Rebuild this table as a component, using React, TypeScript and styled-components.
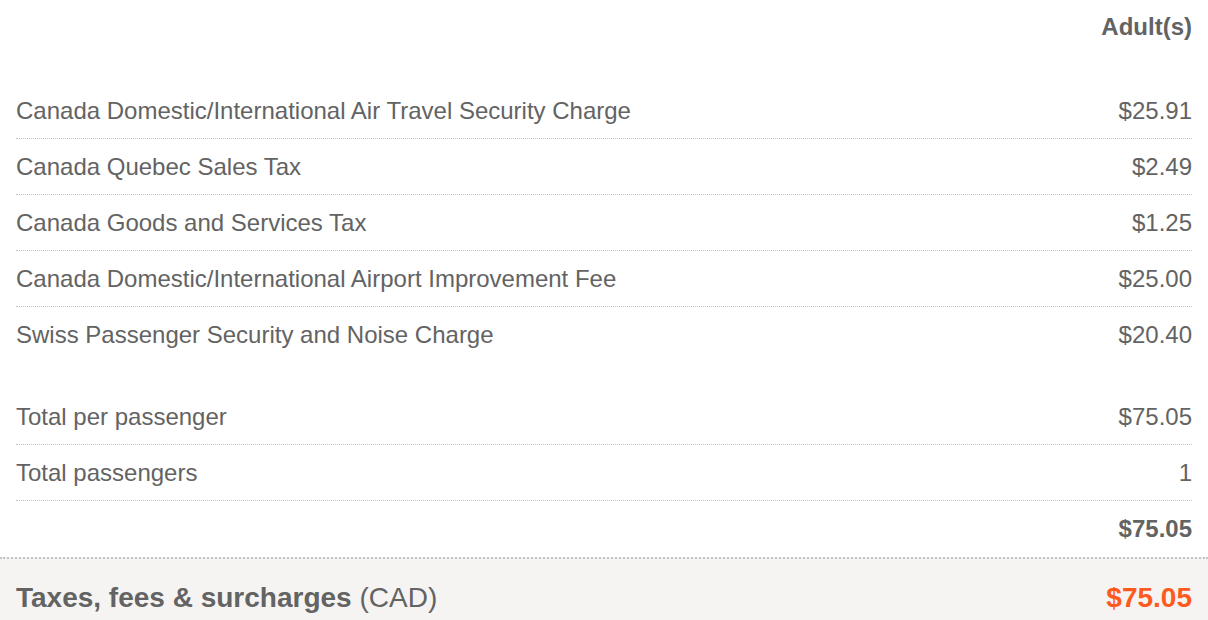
import React from 'react';
import styled, { createGlobalStyle } from 'styled-components';

const GlobalStyle = createGlobalStyle`
    body {
        margin: 0;
        background: #fff;
        font-family: "Liberation Sans", Arial, Helvetica, sans-serif;
        color: #636363;
    }
`;

const Wrapper = styled.div`
    width: 1208px;
`;

const Body = styled.div`
    padding: 0 16px;
`;

const HeaderRow = styled.div`
    display: flex;
    justify-content: flex-end;
    align-items: center;
    height: 53px;
    margin-bottom: 30px;
    font-size: 24px;
    font-weight: bold;
`;

const Group = styled.div<{ $gap?: number }>`
    margin-bottom: ${props => props.$gap ?? 0}px;
`;

const Row = styled.div<{ $bold?: boolean; $last?: boolean }>`
    display: flex;
    justify-content: space-between;
    align-items: center;
    height: 56px;
    padding-top: 1px;
    box-sizing: border-box;
    font-size: 24px;
    font-weight: ${props => (props.$bold ? 'bold' : 'normal')};
    border-bottom: 1px dotted ${props => (props.$last ? 'transparent' : '#c4c4c4')};
`;

const Footer = styled.div`
    display: flex;
    justify-content: space-between;
    align-items: center;
    height: 78px;
    padding: 0 16px;
    background-color: #f5f4f2;
    border-top: 2px dotted #c4c4c4;
    font-size: 28px;
`;

const FooterLabel = styled.div`
    strong {
        font-weight: bold;
    }
`;

const FooterTotal = styled.div`
    font-weight: bold;
    color: #ff5a1e;
`;

const fees = [
    { label: 'Canada Domestic/International Air Travel Security Charge', amount: '$25.91' },
    { label: 'Canada Quebec Sales Tax', amount: '$2.49' },
    { label: 'Canada Goods and Services Tax', amount: '$1.25' },
    { label: 'Canada Domestic/International Airport Improvement Fee', amount: '$25.00' },
    { label: 'Swiss Passenger Security and Noise Charge', amount: '$20.40' },
];

export default function App() {
    return (
        <Wrapper>
            <GlobalStyle />
            <Body>
                <HeaderRow>Adult(s)</HeaderRow>

                <Group $gap={26}>
                    {fees.map((fee, i) => (
                        <Row key={fee.label} $last={i === fees.length - 1}>
                            <span>{fee.label}</span>
                            <span>{fee.amount}</span>
                        </Row>
                    ))}
                </Group>

                <Group>
                    <Row>
                        <span>Total per passenger</span>
                        <span>$75.05</span>
                    </Row>
                    <Row>
                        <span>Total passengers</span>
                        <span>1</span>
                    </Row>
                    <Row $bold $last>
                        <span></span>
                        <span>$75.05</span>
                    </Row>
                </Group>
            </Body>
            <Footer>
                <FooterLabel>
                    <strong>Taxes, fees &amp; surcharges</strong> (CAD)
                </FooterLabel>
                <FooterTotal>$75.05</FooterTotal>
            </Footer>
        </Wrapper>
    );
}
